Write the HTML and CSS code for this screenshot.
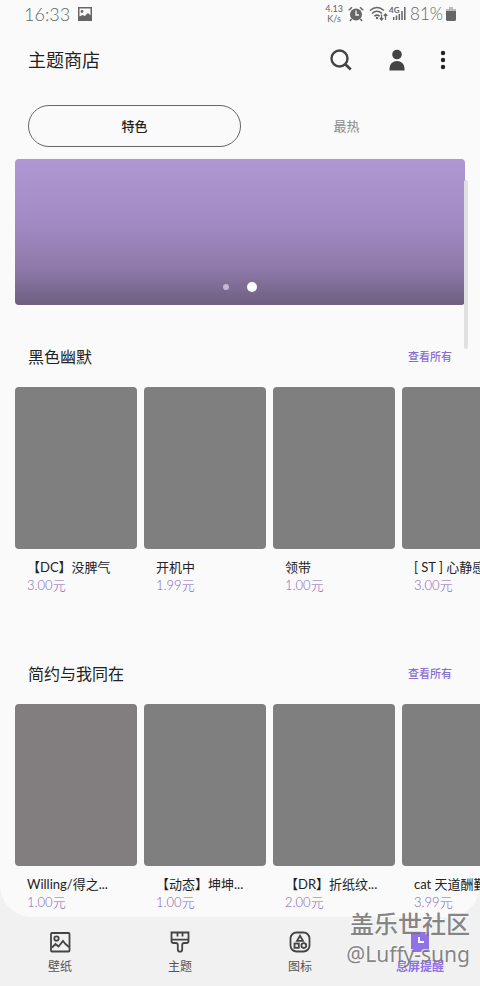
FILE: index.html
```html
<!DOCTYPE html>
<html lang="zh-CN">
<head>
<meta charset="utf-8">
<meta name="viewport" content="width=device-width, initial-scale=1">
<title>主题商店</title>
<link rel="stylesheet" href="styles.css">
</head>
<body>
<main class="page">
  <div class="status">
    <span class="clock">16:33</span>
    <svg class="status-photo" width="14" height="14" viewBox="0 0 14 14"><path fill="#666" fill-rule="evenodd" d="M0 0h14v14H0zM1.500 1.500v8l3-1.500 2.400 1 3-3 2.600 2.300V1.500z"/><circle cx="4" cy="4.500" r="1.400" fill="#666"/></svg>
    <span class="speed"><span>4.13</span><span>K/s</span></span>
    <svg class="alarm" width="16" height="16" viewBox="0 0 16 16"><circle cx="8" cy="8.500" r="6" fill="#666"/><path d="M.8 4.200 4 1.200M12 1.200l3.200 3M3.500 13 2 15M12.500 13l1.500 2" stroke="#666" stroke-width="1.500"/><path d="M8 4.500V9h3" fill="none" stroke="#fafafa" stroke-width="1.300"/></svg>
    <svg class="wifi" width="19" height="16" viewBox="0 0 19 16"><g fill="none" stroke="#666" stroke-width="1.500"><path d="M1 4.500q7-6 14 0M3 7.500q5-4.500 10 0M5.300 10.300q2.700-2.400 5.400 0"/><path d="M12.500 8.500v5M10.800 12l1.700 2 1.700-2M16.500 14V8.500M14.800 10l1.700-2 1.700 2" stroke-width="1.200"/></g><circle cx="8" cy="12" r="1.200" fill="#666"/></svg>
    <svg class="signal" width="17" height="16" viewBox="0 0 17 16"><text x="0" y="7" class="signal-label">4G</text><path d="M4.700 14v-3M7.500 14V9.500M10.300 14V8M13 14V5M15.800 14V1" stroke="#666" stroke-width="1.500"/></svg>
    <span class="battery-level">81%</span>
    <svg class="battery" width="10" height="14" viewBox="0 0 10 14"><path d="M3 0h4v2h3v3H0V2h3z" fill="#bbb"/><path d="M0 4h10v8.500a1.500 1.500 0 0 1-1.500 1.500h-7A1.500 1.500 0 0 1 0 12.500z" fill="#666"/></svg>
  </div>

  <header class="topbar">
    <h1>主题商店</h1>
    <button class="icon-button" type="button" aria-label="搜索"><svg width="24" height="24" viewBox="0 0 24 24" fill="none" stroke="#444"><circle cx="10.500" cy="10.500" r="8" stroke-width="2.400"/><path d="m16.200 16.200 5.600 5.300" stroke-width="2.800"/></svg></button>
    <button class="icon-button account" type="button" aria-label="账户"><svg width="16" height="22" viewBox="0 0 16 22" fill="#444"><circle cx="8" cy="5.500" r="4.800"/><path d="M.5 21.500V19a7.500 7 0 0 1 15 0v2.500z"/></svg></button>
    <button class="icon-button more" type="button" aria-label="更多"><svg width="6" height="20" viewBox="0 0 6 20" fill="#222"><circle cx="3" cy="3" r="2.200"/><circle cx="3" cy="10" r="2.200"/><circle cx="3" cy="17" r="2.200"/></svg></button>
  </header>

  <div class="tabs" role="tablist">
    <button class="tab tab-active" type="button" role="tab" aria-selected="true">特色</button>
    <button class="tab" type="button" role="tab" aria-selected="false">最热</button>
  </div>

  <div class="banner"><span class="dot"></span><span class="dot dot-active"></span></div>

  <section class="shelf">
    <div class="shelf-head"><h2>黑色幽默</h2><a href="#humor">查看所有</a></div>
    <ul class="cards">
      <li class="card"><div class="cover"></div><h3>【DC】没脾气</h3><p>3.00元</p></li>
      <li class="card"><div class="cover"></div><h3>开机中</h3><p>1.99元</p></li>
      <li class="card"><div class="cover"></div><h3>领带</h3><p>1.00元</p></li>
      <li class="card"><div class="cover"></div><h3>[ ST ] 心静感</h3><p>3.00元</p></li>
    </ul>
  </section>

  <section class="shelf">
    <div class="shelf-head"><h2>简约与我同在</h2><a href="#simple">查看所有</a></div>
    <ul class="cards">
      <li class="card"><div class="cover cover-warm"></div><h3>Willing/得之...</h3><p>1.00元</p></li>
      <li class="card"><div class="cover"></div><h3>【动态】坤坤...</h3><p>1.00元</p></li>
      <li class="card"><div class="cover"></div><h3>【DR】折纸纹...</h3><p>2.00元</p></li>
      <li class="card"><div class="cover"></div><h3>cat 天道酬勤</h3><p>3.99元</p></li>
    </ul>
  </section>
  <div class="scroll-thumb"></div>
</main>

<nav class="bottom-nav">
  <a href="#wallpaper"><svg width="24" height="24" viewBox="0 0 24 24" fill="none" stroke="#444" stroke-width="1.800"><rect x="3" y="3" width="18.500" height="18.500" rx="1"/><circle cx="8.500" cy="8.500" r="2.200"/><path d="m4 17.500 3.500-3.500 3 2.500 4.500-5.500 2.500 3 3.500 3"/></svg>壁纸</a>
  <a href="#themes"><svg width="24" height="24" viewBox="0 0 24 24" fill="none" stroke="#444" stroke-width="1.800"><path d="M3.500 2.500h17V11q0 2-2 2h-2.300q-2 0-2 2v4.500a2.200 2.200 0 0 1-4.400 0V15q0-2-2-2H5.500q-2 0-2-2zM3.500 9.700h17M9.500 2.500v4M14.500 2.500v4"/></svg>主题</a>
  <a href="#icons"><svg width="24" height="24" viewBox="0 0 24 24" fill="none" stroke="#444" stroke-width="1.800"><rect x="2.500" y="2.500" width="19" height="19" rx="6"/><path d="m12 5.800 3 5H9z"/><rect x="6.500" y="13.500" width="4.300" height="4.300"/><circle cx="15.800" cy="15.600" r="2.400"/></svg>图标</a>
  <a class="nav-active" href="#aod"><svg width="24" height="24" viewBox="0 0 24 24"><rect x="3" y="2" width="18" height="20" rx="2" fill="#8e72e6"/><path d="M11 7v5h5" fill="none" stroke="#fff" stroke-width="1.800"/></svg>息屏提醒</a>
  <div class="watermark"><strong>盖乐世社区</strong><span>@Luffy-sung</span></div>
</nav>
</body>
</html>
```

FILE: styles.css
```css
* { box-sizing: border-box; }

body {
  margin: 0;
  min-height: 100vh;
  display: flex;
  flex-direction: column;
  background: #f1f1f1;
  color: #222;
  font-family: Lato, "Noto Sans CJK SC", sans-serif;
}

h1, h2, h3, p, ul { margin: 0; padding: 0; font-weight: 400; }
button { border: 0; padding: 0; background: none; font: inherit; color: inherit; }
a { color: inherit; text-decoration: none; }
svg { display: block; flex: none; }

.page {
  position: relative;
  flex: 1;
  padding-bottom: 5px;
  background: #fafafa;
  border-radius: 0 0 32px 32px;
  overflow: hidden;
}

.status {
  display: flex;
  align-items: center;
  height: 28px;
  padding: 0 24px;
  color: #666;
}
.clock, .battery-level { font-size: 18px; font-weight: 300; line-height: 28px; }
.status-photo { margin-left: 8px; }
.speed {
  display: flex;
  flex-direction: column;
  margin-left: auto;
  font-size: 9px;
  line-height: 10px;
  text-align: center;
}
.alarm { margin-left: 5px; }
.wifi { margin-left: 5px; }
.signal { margin-left: 1px; overflow: visible; }
.signal-label { font-size: 8px; font-weight: 700; fill: #666; }
.battery-level { margin-left: 4px; font-size: 17px; }
.battery { margin-left: 3px; }

.topbar {
  display: flex;
  align-items: center;
  height: 64px;
  padding: 0 34px 0 28px;
}
.topbar h1 { flex: 1; font-size: 18px; line-height: 28px; }
.icon-button { display: flex; align-items: center; justify-content: center; }
.account { margin-left: 36px; }
.more { margin-left: 35px; }

.tabs { display: flex; margin: 13px 28px 12px; }
.tab {
  flex: 1;
  height: 42px;
  padding-bottom: 2px;
  border-radius: 21px;
  font-size: 13px;
  color: #8a8a8a;
}
.tab-active { border: 1px solid #666; color: #222; font-weight: 500; }

.banner {
  display: flex;
  align-items: flex-end;
  justify-content: center;
  gap: 18px;
  height: 146px;
  margin: 0 15px 37px;
  padding-bottom: 13px;
  border-radius: 4px;
  background: linear-gradient(#af97d3, #a189c2 45%, #8e79a9 75%, #6e5f80);
}
.dot { width: 6px; height: 6px; margin-bottom: 2px; border-radius: 50%; background: #c5b8d2; }
.dot-active { width: 10px; height: 10px; margin-bottom: 0; background: #fff; }

.shelf + .shelf { margin-top: 64px; }
.shelf-head {
  display: flex;
  align-items: center;
  justify-content: space-between;
  height: 30px;
  margin: 0 28px 15px;
}
.shelf-head h2 { font-size: 16px; line-height: 24px; }
.shelf-head a { font-size: 11px; font-weight: 500; line-height: 18px; color: #8b6fd0; }

.cards {
  display: flex;
  gap: 7px;
  padding-left: 15px;
  list-style: none;
  overflow-x: auto;
  scrollbar-width: none;
}
.card { flex: 0 0 122px; white-space: nowrap; }
.cover { height: 162px; margin-bottom: 8px; border-radius: 4px; background: #7f7f7f; }
.cover-warm { background: #827e7f; }
.card h3 { padding-left: 12px; font-size: 13px; line-height: 20px; }
.card p { padding-left: 12px; font-size: 13px; font-weight: 300; line-height: 17px; margin-bottom: 1px; color: #8468b8; }

.scroll-thumb {
  position: absolute;
  top: 180px;
  right: 12px;
  width: 4px;
  height: 169px;
  border-radius: 2px;
  background: #e1e1e1;
}

.bottom-nav {
  position: relative;
  display: grid;
  grid-template-columns: repeat(4, 1fr);
  height: 69px;
  padding-top: 13px;
}
.bottom-nav a {
  display: flex;
  flex-direction: column;
  align-items: center;
  gap: 3px;
  font-size: 12px;
  line-height: 20px;
  color: #555;
}
.bottom-nav .nav-active { color: #8e72e6; font-weight: 700; }

.watermark {
  position: absolute;
  right: 10px;
  bottom: 18px;
  display: flex;
  flex-direction: column;
  align-items: flex-end;
  color: rgba(112, 112, 112, 0.85);
  text-shadow: -1px -1px 0 rgba(255, 255, 255, 0.7);
  pointer-events: none;
}
.watermark strong { font-size: 24px; font-weight: 500; line-height: 32px; }
.watermark span { font-family: "Noto Sans", sans-serif; font-size: 21px; line-height: 28px; }
```
